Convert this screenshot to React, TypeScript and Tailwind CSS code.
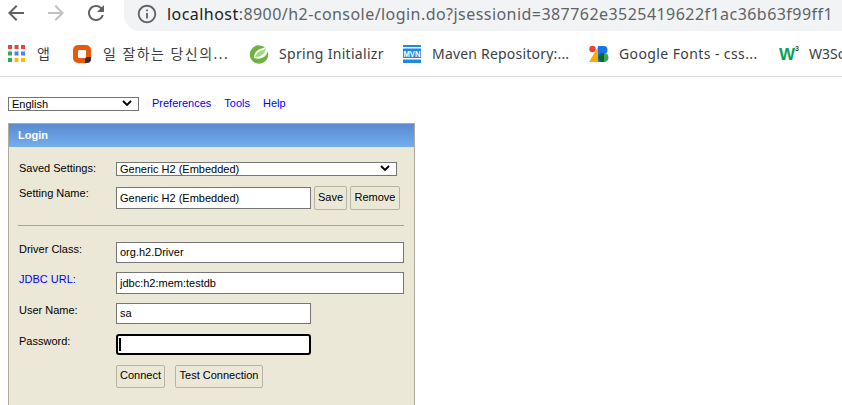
const ui = "font-['Noto_Sans','Noto_Sans_CJK_KR',sans-serif]";

function Bookmark({ icon, label, w, track }: { icon: React.ReactNode; label: string; w: string; track: string }) {
  return (
    <div className={`flex items-center shrink-0 ${w}`}>
      {icon}
      <span className={`whitespace-nowrap ${track}`}>{label}</span>
    </div>
  );
}

const AppsIcon = (
  <svg width="17" height="17" viewBox="0 0 17 17" className="mr-[12px] shrink-0">
    {[
      ["#e8453c", "#e8453c", "#e8453c"],
      ["#34a853", "#4285f4", "#4285f4"],
      ["#34a853", "#fbbc05", "#fbbc05"],
    ].map((row, r) =>
      row.map((c, i) => <rect key={`${r}${i}`} x={i * 6.5} y={r * 6.5} width="4" height="4" fill={c} />)
    )}
  </svg>
);

const OrangeIcon = (
  <svg width="18" height="18" viewBox="0 0 18 18" className="mr-[12px] shrink-0">
    <rect x="0" y="0" width="18" height="18" rx="5" fill="#e8590c" />
    <rect x="5" y="5" width="8" height="8" rx="1" fill="#fff" />
    <path d="M12 18v-3a3 3 0 0 1 3-3h3v2a4 4 0 0 1-4 4z" fill="#333" />
  </svg>
);

const SpringIcon = (
  <svg width="20" height="20" viewBox="0 0 20 20" className="mr-[10px] shrink-0">
    <circle cx="10" cy="10.500" r="9.300" fill="#6db33f" />
    <path d="M19 0c.8 4 .3 8-2 11-3 3.800-8 4.500-12 3 0-5 3-8.500 7.500-9.500C15 4 17 3 19 0z" fill="#fff" />
    <path d="M17 3.500c-.3 3.500-2 7-5.500 8.500-2 .8-4 .8-5.500 1.300 1-3.500 3.500-6.300 7-7 1.700-.4 3-1.300 4-2.800z" fill="#a5d97c" />
  </svg>
);

const MvnIcon = (
  <svg width="18" height="18" viewBox="0 0 18 18" className="mr-[11px] shrink-0">
    <rect x="0" y="0" width="18" height="18" fill="#1f88e0" />
    <rect x="0" y="2" width="18" height="1.500" fill="#fff" />
    <rect x="0" y="13" width="18" height="1.500" fill="#fff" />
    <text x="9" y="12" textAnchor="middle" fontSize="8.500" fontWeight="700" fill="#fff" textLength="17" lengthAdjust="spacingAndGlyphs" fontFamily="Liberation Sans">MVN</text>
  </svg>
);

const FontsIcon = (
  <svg width="20" height="18" viewBox="0 0 20 18" className="mr-[10px] shrink-0">
    <path d="M0 17 9 2v15z" fill="#f9ab00" />
    <circle cx="3.500" cy="4" r="3.200" fill="#ea4335" />
    <path d="M9 1h5v16H9z" fill="#1a73e8" />
    <circle cx="14.500" cy="5" r="4" fill="#1a73e8" />
    <circle cx="15" cy="12.500" r="4.500" fill="#34a853" />
    <path d="M14 8h1v9h-1a4.500 4.500 0 0 1 0-9z" fill="#0d652d" />
  </svg>
);

const W3Icon = (
  <svg width="21" height="18" viewBox="0 0 21 18" className="mr-[9px] shrink-0">
    <text x="0" y="15" fontSize="17" fontWeight="700" fill="#04a35c" fontFamily="Liberation Sans">W</text>
    <text x="16" y="6" fontSize="7" fontWeight="700" fill="#444" fontFamily="Liberation Sans">3</text>
  </svg>
);

function Label({ children, blue }: { children: React.ReactNode; blue?: boolean }) {
  return (
    <div className={`w-[97px] shrink-0 leading-[14px] ${blue ? "text-[#0000ff]" : "text-black"}`}>{children}</div>
  );
}

function Select({ value, w }: { value: string; w: string }) {
  return (
    <div className={`relative h-[14px] ${w}`}>
      <select className="appearance-none w-full h-full border border-[#767676] bg-white pl-[3px] text-[11px] leading-[12px] text-black font-['Liberation_Sans',Arial,sans-serif]">
        <option>{value}</option>
      </select>
      <svg width="10" height="6" viewBox="0 0 10 6" className="absolute right-[7px] top-[4px] pointer-events-none">
        <path d="M1 1l4 4 4-4" fill="none" stroke="#000" strokeWidth="1.800" />
      </svg>
    </div>
  );
}

const inputCls =
  "border border-[#767676] bg-white pl-[3px] pb-[1px] text-[11px] text-black font-['Liberation_Sans',Arial,sans-serif] outline-none";
const btnCls =
  "border border-[#b7b4a6] rounded-[2px] bg-[#ece8d8] pb-[2px] text-[11px] text-black flex items-center justify-center";

export default function App() {
  return (
    <div className="w-[842px] h-[405px] overflow-hidden bg-white flex flex-col">
      {/* browser toolbar */}
      <div className="h-[31px] flex items-start shrink-0">
        <svg width="24" height="24" viewBox="0 0 24 24" fill="#5f6368" className="ml-[4px] mt-[1px]">
          <path d="M20 11H7.830l5.590-5.590L12 4l-8 8 8 8 1.410-1.410L7.830 13H20v-2z" />
        </svg>
        <svg width="24" height="24" viewBox="0 0 24 24" fill="#bfc1c4" className="ml-[16px] mt-[1px]">
          <path d="M12 4l-1.410 1.410L16.170 11H4v2h12.170l-5.580 5.590L12 20l8-8z" />
        </svg>
        <svg width="24" height="24" viewBox="0 0 24 24" fill="#5f6368" className="ml-[16px] mt-[1px]">
          <path d="M17.650 6.350A7.958 7.958 0 0 0 12 4c-4.420 0-7.990 3.580-7.990 8s3.570 8 7.990 8c3.730 0 6.840-2.550 7.730-6h-2.080A5.990 5.990 0 0 1 12 18c-3.310 0-6-2.690-6-6s2.690-6 6-6c1.660 0 3.140.690 4.220 1.780L13 11h7V4l-2.350 2.350z" />
        </svg>
        <div className="ml-[16px] flex-1 h-[31px] bg-[#f1f3f4] rounded-bl-[16px] flex items-center pl-[12px] pb-[4px]">
          <svg width="22" height="22" viewBox="0 0 24 24" fill="#5f6368" className="shrink-0">
            <path d="M11 7h2v2h-2zm0 4h2v6h-2zm1-9C6.480 2 2 6.480 2 12s4.480 10 10 10 10-4.480 10-10S17.520 2 12 2zm0 18c-4.410 0-8-3.590-8-8s3.590-8 8-8 8 3.590 8 8-3.590 8-8 8z" />
          </svg>
          <span className={`ml-[9px] whitespace-nowrap text-[16px] tracking-[0.45px] text-[#5f6368] ${ui}`}>
            <span className="text-[#202124]">localhost</span>:8900/h2-console/login.do?jsessionid=387762e3525419622f1ac36b63f99ff1
          </span>
        </div>
      </div>

      {/* bookmarks bar */}
      <div className={`h-[46px] shrink-0 border-b border-[#dadce0] flex items-center pl-[8px] overflow-hidden text-[14px] text-[#3c4043] ${ui}`}>
        <Bookmark icon={AppsIcon} label="앱" w="w-[65px]" track="" />
        <Bookmark icon={OrangeIcon} label="일 잘하는 당신의..." w="w-[176px]" track="tracking-[1.450px]" />
        <Bookmark icon={SpringIcon} label="Spring Initializr" w="w-[154px]" track="tracking-[0.300px]" />
        <Bookmark icon={MvnIcon} label="Maven Repository:..." w="w-[186px]" track="tracking-[0.200px]" />
        <Bookmark icon={FontsIcon} label="Google Fonts - css..." w="w-[190px]" track="tracking-[0.400px]" />
        <Bookmark icon={W3Icon} label="W3Schools" w="w-[100px]" track="" />
      </div>

      {/* page */}
      <div className="flex-1 min-h-0 overflow-hidden pl-[8px] pt-[19px] font-['Liberation_Sans',Arial,sans-serif] text-[11px]">
        <div className="flex items-center h-[14px]">
          <Select value="English" w="w-[131px]" />
          <a className="ml-[13px] text-[#0000ff]">Preferences</a>
          <a className="ml-[13px] text-[#0000ff]">Tools</a>
          <a className="ml-[13px] text-[#0000ff]">Help</a>
        </div>

        <div className="mt-[13px] w-[407px] border border-b-0 border-[#aeab9b] bg-[#ece8d8] h-[300px]">
          <div className="h-[23px] bg-gradient-to-b from-[#5a8ad0] to-[#74aeef] flex items-center pl-[9px] text-white font-bold">
            Login
          </div>
          <div className="px-[10px] pt-[14px]">
            <div className="flex items-start">
              <Label>Saved Settings:</Label>
              <Select value="Generic H2 (Embedded)" w="w-[281px]" />
            </div>

            <div className="flex items-start mt-[11px]">
              <Label>Setting Name:</Label>
              <input readOnly defaultValue="Generic H2 (Embedded)" className={`${inputCls} h-[22px] w-[195px] mt-[1px]`} />
              <div className={`${btnCls} h-[24px] w-[33px] ml-[3px]`}>Save</div>
              <div className={`${btnCls} h-[24px] w-[50px] ml-[3px]`}>Remove</div>
            </div>

            <div className="h-px bg-[#a5a398] mt-[15px] -ml-px" />

            <div className="flex items-start mt-[16px]">
              <Label>Driver Class:</Label>
              <input readOnly defaultValue="org.h2.Driver" className={`${inputCls} h-[21px] w-[288px]`} />
            </div>
            <div className="flex items-start mt-[9px]">
              <Label blue>JDBC URL:</Label>
              <input readOnly defaultValue="jdbc:h2:mem:testdb" className={`${inputCls} h-[22px] w-[288px]`} />
            </div>
            <div className="flex items-start mt-[9px]">
              <Label>User Name:</Label>
              <input readOnly defaultValue="sa" className={`${inputCls} h-[21px] w-[195px]`} />
            </div>
            <div className="flex items-start mt-[10px]">
              <Label>Password:</Label>
              <div className="w-[195px] h-[21px] border-2 border-black rounded-[3px] bg-white flex items-center pl-[1px]">
                <div className="w-[1.500px] h-[13px] bg-black" />
              </div>
            </div>
            <div className="flex items-start mt-[10px] pl-[97px]">
              <div className={`${btnCls} h-[23px] w-[49px]`}>Connect</div>
              <div className={`${btnCls} h-[23px] w-[88px] ml-[10px]`}>Test Connection</div>
            </div>
          </div>
        </div>
      </div>
    </div>
  );
}
